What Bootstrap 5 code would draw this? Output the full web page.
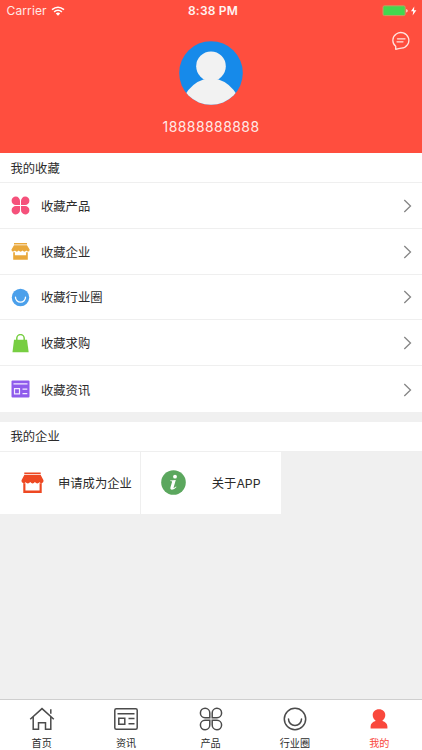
<!DOCTYPE html>
<html lang="zh-CN">
<head>
<meta charset="utf-8">
<meta name="viewport" content="width=device-width, initial-scale=1">
<title>我的</title>
<link href="https://cdn.jsdelivr.net/npm/bootstrap@5.3.0/dist/css/bootstrap.min.css" rel="stylesheet">
<style>
body{font-family:Inter,"Noto Sans CJK SC",sans-serif;font-size:12.3px;line-height:18px;color:#2b2b2b;background:#f0f0f0}
svg{display:block;flex:none}
.profile{height:153px;background:#ff4e3e;color:#fff}
.status{height:22px;padding:0 5px 0 6.5px;font-size:12px;color:#ffe9e6}
.status>div{flex:1 1 0}
.carrier{letter-spacing:.12px}
.clock{font-weight:600;font-size:12px;letter-spacing:.2px;color:#fff4f2;padding-left:2.5px}
.chat{right:12px;top:31px}
.avatar{margin-top:18.5px}
.phone{margin-top:13px;font-size:14px;letter-spacing:.42px;color:#ffe9e6}
.heading{height:30px;padding:2px 10.5px 0;border-bottom:1px solid #efefef}
.entry{height:45.8px;padding:1px 10px 0 11px;border-bottom:1px solid #efefef}
.entry:last-child{border-bottom:0}
.entry .label{margin-left:11px;padding-top:2px}
.company{margin-top:10px}
.tile{width:140.3px;height:62px;padding:0 8.500px 0 16px}
.tile span{padding-top:2px}
.tile+.tile{border-left:1px solid #efefef;padding-right:16px}
.tabs{height:51px;border-top:1px solid #cfcfcf;font-size:10.1px;line-height:14px}
.tabs a{color:#2b2b2b;padding:6px 1px 0 0}
.tabs a.on{color:#f9483c}
.tabs span{margin-top:3.500px}
</style>
<script src="https://cdn.jsdelivr.net/npm/bootstrap@5.3.0/dist/js/bootstrap.bundle.min.js"></script>
</head>
<body class="d-flex flex-column vh-100 overflow-hidden">
<svg width="0" height="0" class="position-absolute">
<symbol id="next" viewBox="0 0 9 14"><path d="M1.3 1 7.5 7 1.3 13" fill="none" stroke="#858585" stroke-width="1.3"/></symbol>
</svg>
<header class="profile position-relative d-flex flex-column align-items-center">
<div class="status w-100 d-flex align-items-center">
<div class="d-flex align-items-center"><span class="carrier">Carrier</span>
<svg class="ms-1" width="14" height="11" viewBox="0 0 14 11"><g fill="none" stroke="#fff" stroke-width="1.5"><path d="M1 3.700Q7-1.300 13 3.700"/><path d="M3.1 5.900Q7 2.600 10.9 5.900"/></g><path d="M4.8 7.400Q7 5.600 9.2 7.400L7 9.700Z" fill="#fff"/></svg></div>
<span class="clock">8:38 PM</span>
<div class="d-flex justify-content-end">
<svg width="35" height="12" viewBox="0 0 35 12"><rect x="1" y=".8" width="22.2" height="9.800" rx="1.4" fill="#43d74f" stroke="#c99a63"/><path d="M24.2 4v3.6q1.5-.4 1.5-1.8T24.2 4Z" fill="#ffd9d4"/><path d="M32.300 1.400 29 6.200h2.300l-.7 4.200 3.800-5.200h-2.400Z" fill="#fff"/></svg></div>
</div>
<svg class="chat position-absolute" width="19" height="20" viewBox="0 0 19 20"><g fill="none" stroke="#ffe4e0" stroke-width="1.3" stroke-linecap="round" stroke-linejoin="round"><path d="M4.700 18.4V15.300A8 7.8 0 1 1 10.500 17.100Q7.500 17.4 4.700 18.4Z"/><path d="M6.500 7.8h7.5M6 10.8h6"/></g></svg>
<svg class="avatar" width="64" height="64" viewBox="0 0 64 64"><defs><clipPath id="disc"><circle cx="32" cy="32" r="31.8"/></clipPath></defs><g clip-path="url(#disc)"><path fill="#168aea" d="M0 0h64v64H0z"/><circle cx="32" cy="25.2" r="14.800" fill="#f2f2f2"/><path d="M6 54Q13 42 25 38.2h14Q51 42 58 54v10H6Z" fill="#f2f2f2"/></g></svg>
<div class="phone">18888888888</div>
</header>
<main class="flex-grow-1">
<section class="bg-white">
<div class="heading d-flex align-items-center">我的收藏</div>
<div>
<div class="entry d-flex align-items-center">
<svg width="19" height="19" viewBox="0 0 19 19" fill="#f5517b"><path d="M9 9H4.9a4.200 4.200 0 1 1 4.100-4.100ZM10 9V4.900a4.200 4.200 0 1 1 4.100 4.100ZM9 10v4.100A4.200 4.200 0 1 1 4.900 10ZM10 10h4.100a4.200 4.200 0 1 1-4.100 4.100Z"/></svg>
<span class="label">收藏产品</span><svg class="ms-auto" width="9" height="14"><use href="#next"/></svg></div>
<div class="entry d-flex align-items-center">
<svg width="19" height="19" viewBox="0 0 19 19" fill="#e9a83b"><path d="M3 .9h13v1.500H3zM3 3.200h13l2.600 4.200q.1 2.100-1.500 2.100-1.200 0-1.800-.9-.8 1.100-1.900 1.100t-1.900-1.100q-.8 1.100-1.900 1.100T7.700 8.600Q6.900 9.700 5.800 9.700T3.900 8.600Q3.300 9.500 2 9.500.4 9.500.5 7.400ZM2.200 10.300h1.700v2.900h11.200v-2.900h1.700v7.500H2.200Z"/></svg>
<span class="label">收藏企业</span><svg class="ms-auto" width="9" height="14"><use href="#next"/></svg></div>
<div class="entry d-flex align-items-center">
<svg width="19" height="19" viewBox="0 0 19 19"><circle cx="9.500" cy="9.500" r="8.700" fill="#4ba0eb"/><path d="M4.500 9.200a5 5 0 0 0 10 0" fill="none" stroke="#fff" stroke-width="1.300" stroke-linecap="round"/></svg>
<span class="label">收藏行业圈</span><svg class="ms-auto" width="9" height="14"><use href="#next"/></svg></div>
<div class="entry d-flex align-items-center">
<svg width="19" height="19" viewBox="0 0 19 19"><path d="M3 5.800h13l1.700 12.500H1.500Z" fill="#77ce42"/><path d="M5.800 7V4.300a3.700 3.700 0 0 1 7.400 0V7" fill="none" stroke="#77ce42" stroke-width="1.500"/></svg>
<span class="label">收藏求购</span><svg class="ms-auto" width="9" height="14"><use href="#next"/></svg></div>
<div class="entry d-flex align-items-center">
<svg width="19" height="19" viewBox="0 0 19 19"><rect x=".5" y=".6" width="18" height="17" rx="1" fill="#8f5cec"/><path d="M2.500 3.900h14M11.500 9.100h4.800M11.500 13.600h4.800M3.500 8.600h5v5.200h-5z" fill="none" stroke="#f3ecff" stroke-width="1.200"/></svg>
<span class="label">收藏资讯</span><svg class="ms-auto" width="9" height="14"><use href="#next"/></svg></div>
</div>
</section>
<section class="company">
<div class="heading bg-white d-flex align-items-center">我的企业</div>
<div class="d-flex">
<div class="tile bg-white d-flex align-items-center justify-content-between">
<svg class="ms-1" width="25" height="24" viewBox="0 0 19 19" fill="#ee4822"><path d="M3 1.100h13v1.400H3zM3 3.200h13l2.200 4.200q.1 2.200-1.500 2.200-1 0-1.600-.7-.8.900-1.800.9t-1.900-1.100q-.8 1.100-1.800 1.100T7.700 8.700Q6.900 9.800 5.800 9.800T4 8.900Q3.400 9.600 2.400 9.600.7 9.600.8 7.400ZM2.200 9.700h1.700v5.700h11.200V9.700h1.700v7.700H2.200Z"/></svg>
<span>申请成为企业</span></div>
<div class="tile bg-white d-flex align-items-center justify-content-between">
<svg class="ms-1" width="25" height="25" viewBox="0 0 25 25"><circle cx="12.500" cy="12.500" r="12.300" fill="#5ba75e"/><circle cx="14" cy="6.700" r="1.900" fill="#fff"/><path d="m9.200 10.500 5.600-.6-2.200 7.600q-.3 1.200 2.400-1l.5.600q-2.300 2.600-4.500 2.600-2.200-.1-1.500-2.500l1.600-5.400q.2-.7-2-.700Z" fill="#fff"/></svg>
<span class="me-1">关于APP</span></div>
</div>
</section>
</main>
<nav class="tabs bg-white d-flex text-center">
<a href="#" class="col d-flex flex-column align-items-center text-decoration-none"><svg width="26" height="26" viewBox="0 0 26 26" fill="none" stroke="#4b4b4b" stroke-width="1.500"><path d="M1.200 13.200 13 2.600l11.800 10.600M4.200 11v12.300h5.300v-6.500h7v6.500h5.300V11M21.800 3.300v4.500"/></svg><span>首页</span></a>
<a href="#" class="col d-flex flex-column align-items-center text-decoration-none"><svg width="26" height="26" viewBox="0 0 26 26" fill="none" stroke="#4b4b4b" stroke-width="1.500"><rect x="1.800" y="2.700" width="22.400" height="20.600" rx="1.500"/><path d="M4.500 7.800h17M5.800 12.200h6v6h-6zM15.500 12.500h6M15.500 17.700h6"/></svg><span>资讯</span></a>
<a href="#" class="col d-flex flex-column align-items-center text-decoration-none"><svg width="26" height="26" viewBox="0 0 26 26" fill="none" stroke="#4b4b4b" stroke-width="1.500"><path d="M11.800 11.700H7A4.700 4.700 0 1 1 11.800 7ZM14.200 11.700V7a4.700 4.700 0 1 1 4.800 4.700ZM11.800 14.300V19A4.700 4.700 0 1 1 7 14.300ZM14.200 14.300H19a4.700 4.700 0 1 1-4.800 4.700Z"/></svg><span>产品</span></a>
<a href="#" class="col d-flex flex-column align-items-center text-decoration-none"><svg width="26" height="26" viewBox="0 0 26 26" fill="none" stroke="#4b4b4b" stroke-width="1.500"><circle cx="13" cy="13" r="10.700"/><path d="M6.500 13a6.500 6.500 0 0 0 13 0" stroke-linecap="round"/></svg><span>行业圈</span></a>
<a href="#" class="on col d-flex flex-column align-items-center text-decoration-none"><svg width="26" height="26" viewBox="0 0 26 26" fill="#f9483c"><path d="M13 3.200c3.800 0 6.300 2.500 6.300 5.800 0 2.400-1.200 4.300-2.800 5.400v.7c2.700.8 4.900 2.500 4.900 5.300v2.200H4.600v-2.200c0-2.800 2.200-4.500 4.900-5.300v-.7c-1.600-1.100-2.800-3-2.800-5.400 0-3.300 2.500-5.800 6.300-5.800Z"/></svg><span>我的</span></a>
</nav>
</body>
</html>
